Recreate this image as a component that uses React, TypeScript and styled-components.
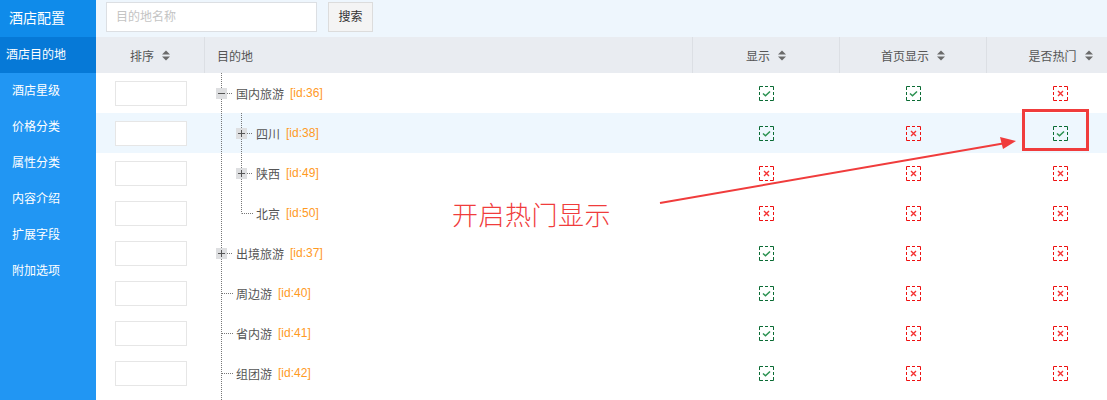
import React from "react";
import styled, {createGlobalStyle} from "styled-components";

const GlobalStyle = createGlobalStyle`
    html, body {
        margin: 0;
        padding: 0;
        background: #fff;
    }
    body {
        font-family: "Liberation Sans", "Noto Sans CJK SC", sans-serif;
        font-size: 12px;
        color: #555;
    }
`

const Root = styled.div`
    position: relative;
    display: flex;
    width: 1107px;
    height: 400px;
    overflow: hidden;
`

const Sidebar = styled.div`
    width: 96px;
    flex-shrink: 0;
    background: #2196f3;
    display: flex;
    flex-direction: column;
`

const SideTitle = styled.div`
    height: 37px;
    flex-shrink: 0;
    line-height: 37px;
    padding-left: 9px;
    background: #0f8bea;
    color: #fff;
    font-size: 14px;
`

const SideItem = styled.div<{ $active?: boolean }>`
    height: 36px;
    flex-shrink: 0;
    line-height: 36px;
    padding-left: ${p => p.$active ? 6 : 12}px;
    background: ${p => p.$active ? "#0679d7" : "transparent"};
    color: #fff;
    font-size: 12px;
`

const Main = styled.div`
    flex: 1;
    min-width: 0;
    overflow: hidden;
    display: flex;
    flex-direction: column;
`

const Toolbar = styled.div`
    height: 37px;
    flex-shrink: 0;
    box-sizing: border-box;
    padding: 2px 0 0 10px;
    background: #eef6fd;
    display: flex;
    align-items: flex-start;
    gap: 11px;
`

const SearchInput = styled.div`
    width: 211px;
    height: 30px;
    box-sizing: border-box;
    border: 1px solid #dcdfe3;
    background: #fff;
    padding-left: 9px;
    line-height: 28px;
    color: #c4c4c4;
    font-size: 12px;
`

const SearchButton = styled.div`
    width: 45px;
    height: 30px;
    box-sizing: border-box;
    border: 1px solid #dcdcdc;
    background: #f4f4f4;
    line-height: 28px;
    text-align: center;
    color: #333;
    font-size: 12px;
`

const Table = styled.div`
    width: 1038px;
    flex-shrink: 0;
`

const cols = "109px 488px 147px 147px 147px";

const HeadRow = styled.div`
    display: grid;
    grid-template-columns: ${cols};
    height: 36px;
    background: #e9ecf1;
`

const HeadCell = styled.div<{ $left?: boolean }>`
    display: flex;
    align-items: center;
    justify-content: ${p => p.$left ? "flex-start" : "center"};
    padding-left: ${p => p.$left ? 12 : 0}px;
    gap: 8px;
    border-right: 1px solid #dcdfe4;
    color: #555;
    font-size: 12px;
    &:last-child {
        border-right: none;
    }
`

const Row = styled.div<{ $hover?: boolean }>`
    display: grid;
    grid-template-columns: ${cols};
    height: 40px;
    background: ${p => p.$hover ? "#eef7fe" : "#fff"};
`

const Cell = styled.div`
    display: flex;
    align-items: center;
    justify-content: center;
`

const SortBox = styled.div`
    width: 72px;
    height: 25px;
    box-sizing: border-box;
    border: 1px solid #e6e6e6;
    background: #fff;
    margin-left: 1px;
`

const TreeCell = styled.div`
    display: flex;
    align-items: stretch;
    padding-left: 11px;
`

const Label = styled.div`
    display: flex;
    align-items: center;
    gap: 6px;
    color: #555;
    white-space: nowrap;
`

const IdTag = styled.span`
    color: #ff9a1f;
`

const Callout = styled.div`
    position: absolute;
    left: 452px;
    top: 197px;
    color: #f03c3c;
    font-family: "Noto Sans CJK SC", sans-serif;
    font-weight: 300;
    font-size: 26px;
    line-height: 34px;
    letter-spacing: 0.5px;
    pointer-events: none;
`

const Marker = styled.div`
    position: absolute;
    left: 1022px;
    top: 109px;
    width: 67px;
    height: 42px;
    box-sizing: border-box;
    border: 3px solid #f03c3c;
    pointer-events: none;
`

const Arrow = styled.svg`
    position: absolute;
    left: 0;
    top: 0;
    pointer-events: none;
`

const SortIcon = () => (
    <svg width="8" height="11" viewBox="0 0 8 11">
        <path d="M0 4.5 L4 0.5 L8 4.5 Z M0 6.5 L8 6.5 L4 10.5 Z" fill="#6a6a6a"/>
    </svg>
);

const Check = ({on}: { on: boolean }) => {
    const c = on ? "#0b6b34" : "#ee1111";
    return (
        <svg width="15" height="15" viewBox="0 0 15 15">
            <g stroke={c} strokeWidth="1" fill="none">
                <path d="M0.5 4 V0.5 H4 M11 0.5 H14.5 V4 M14.5 11 V14.5 H11 M4 14.5 H0.5 V11"/>
                <path d="M6 0.5 H9 M6 14.5 H9 M0.5 6 V9 M14.5 6 V9"/>
            </g>
            {on
                ? <path d="M4 7.5 L6.5 9.8 L11 5.5" stroke="#2b9150" strokeWidth="1.5" fill="none"/>
                : <path d="M5 5 L10 10 M10 5 L5 10" stroke="#f43333" strokeWidth="1.4" fill="none"/>}
        </svg>
    );
};

// one 20px column of tree connectors: vertical line at x=5.5
const Branch = ({vertical, connector, toggle}: {
    vertical: "full" | "half" | "none";
    connector?: boolean;
    toggle?: "plus" | "minus";
}) => (
    <svg width="20" height="40" viewBox="0 0 20 40" style={{flexShrink: 0}}>
        {vertical !== "none" &&
            <line x1="5.5" y1="0" x2="5.5" y2={vertical === "full" ? 40 : 20.5}
                  stroke="#777" strokeDasharray="1 1"/>}
        {connector &&
            <line x1={toggle ? 11 : 6} y1="20.5" x2="17" y2="20.5" stroke="#777" strokeDasharray="1 1"/>}
        {toggle && <>
            <rect x="0" y="15" width="11" height="11" fill="#dedfe1"/>
            <path d={toggle === "plus" ? "M2 20.5 H9 M5.5 17 V24" : "M2 20.5 H9"} stroke="#555"/>
        </>}
    </svg>
);

type Item = {
    name: string;
    id: number;
    level: 1 | 2;
    toggle?: "plus" | "minus";
    last?: boolean;
    show: boolean;
    home: boolean;
    hot: boolean;
    hover?: boolean;
};

const rows: Item[] = [
    {name: "国内旅游", id: 36, level: 1, toggle: "minus", show: true, home: true, hot: false},
    {name: "四川", id: 38, level: 2, toggle: "plus", show: true, home: false, hot: true, hover: true},
    {name: "陕西", id: 49, level: 2, toggle: "plus", show: false, home: false, hot: false},
    {name: "北京", id: 50, level: 2, last: true, show: false, home: false, hot: false},
    {name: "出境旅游", id: 37, level: 1, toggle: "plus", show: true, home: false, hot: false},
    {name: "周边游", id: 40, level: 1, show: true, home: false, hot: false},
    {name: "省内游", id: 41, level: 1, show: true, home: false, hot: false},
    {name: "组团游", id: 42, level: 1, show: true, home: false, hot: false},
];

const menu = ["酒店星级", "价格分类", "属性分类", "内容介绍", "扩展字段", "附加选项"];

export default function App() {
    return (
        <Root>
            <GlobalStyle/>
            <Sidebar>
                <SideTitle>酒店配置</SideTitle>
                <SideItem $active>酒店目的地</SideItem>
                {menu.map(m => <SideItem key={m}>{m}</SideItem>)}
            </Sidebar>
            <Main>
                <Toolbar>
                    <SearchInput>目的地名称</SearchInput>
                    <SearchButton>搜索</SearchButton>
                </Toolbar>
                <Table>
                    <HeadRow>
                        <HeadCell>排序<SortIcon/></HeadCell>
                        <HeadCell $left>目的地</HeadCell>
                        <HeadCell>显示<SortIcon/></HeadCell>
                        <HeadCell>首页显示<SortIcon/></HeadCell>
                        <HeadCell>是否热门<SortIcon/></HeadCell>
                    </HeadRow>
                    {rows.map(r => (
                        <Row key={r.id} $hover={r.hover}>
                            <Cell><SortBox/></Cell>
                            <TreeCell>
                                {r.level === 2 && <Branch vertical="full"/>}
                                <Branch vertical={r.last ? "half" : "full"} connector toggle={r.toggle}/>
                                <Label>{r.name}<IdTag>[id:{r.id}]</IdTag></Label>
                            </TreeCell>
                            <Cell><Check on={r.show}/></Cell>
                            <Cell><Check on={r.home}/></Cell>
                            <Cell><Check on={r.hot}/></Cell>
                        </Row>
                    ))}
                    <Row>
                        <Cell/>
                        <TreeCell><Branch vertical="full"/></TreeCell>
                        <Cell/>
                        <Cell/>
                        <Cell/>
                    </Row>
                </Table>
            </Main>

            <Callout>开启热门显示</Callout>
            <Arrow width="1107" height="400" viewBox="0 0 1107 400">
                <line x1="660" y1="203" x2="1003" y2="143.5" stroke="#f03c3c" strokeWidth="2"/>
                <path d="M1016 141 L1000 137 L1003 149 Z" fill="#f03c3c"/>
            </Arrow>
            <Marker/>
        </Root>
    );
}
